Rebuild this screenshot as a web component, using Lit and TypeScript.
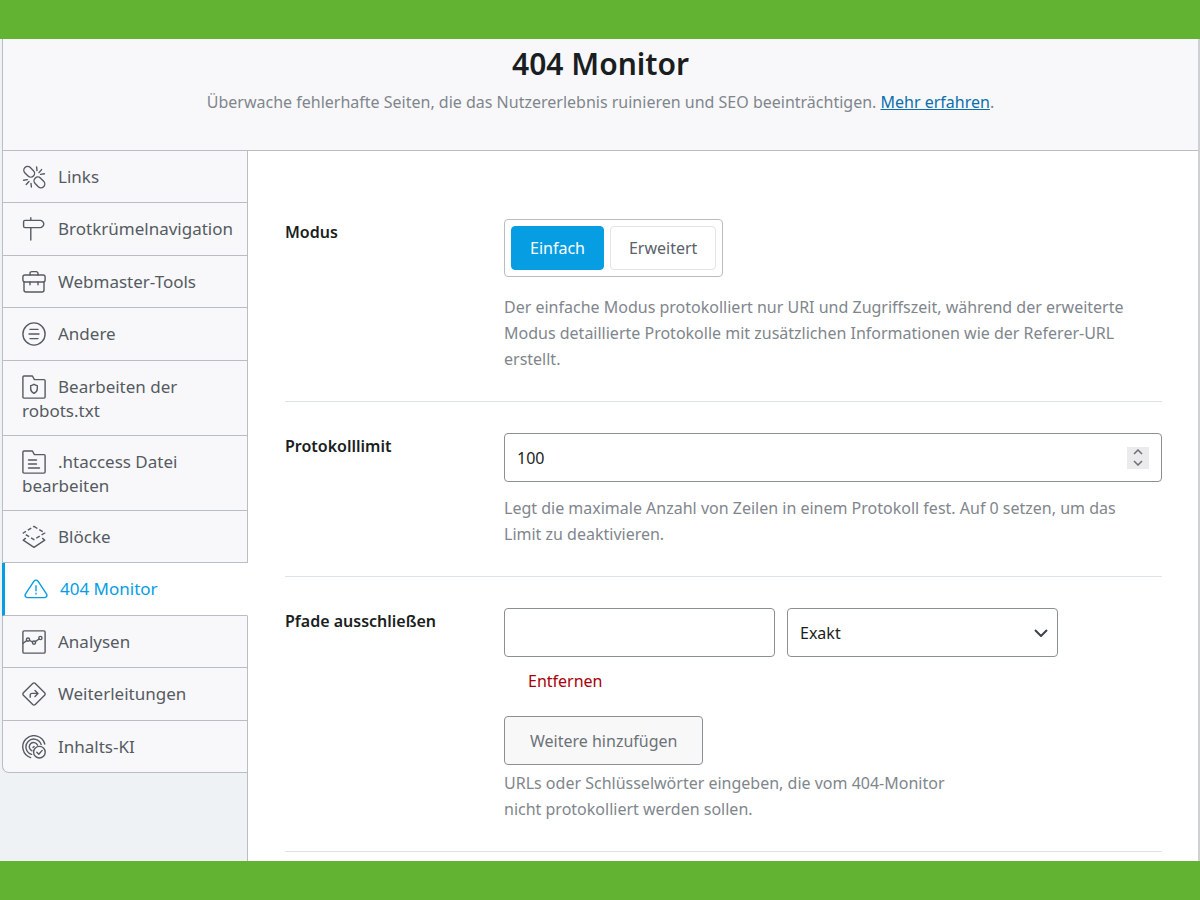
import { LitElement, html, svg, css } from "lit";
import { customElement, state } from "lit/decorators.js";
import { classMap } from "lit/directives/class-map.js";

const icons = {
  links: svg`<rect x="1.2" y="3" width="12" height="7.6" rx="3.8" transform="rotate(45 7.2 6.8)"/><rect x="11.4" y="13.6" width="12" height="7.6" rx="3.8" transform="rotate(45 17.4 17.4)"/><path d="M15 5.6 14.6 2M17 7.6l2.6-3M18.6 9.4l3.8-.6M9 18.4l.4 3.6M7 16.4l-2.8 3M5.4 14.6l-3.8.6"/>`,
  signpost: svg`<path d="M8.800 .8v2.600M8.800 10.600V23M3 3.400h15.200c1.600 0 3.600 2 3.600 3.600s-2 3.600-3.600 3.600H3c-.9 0-1.400-.6-1.400-1.400V4.800c0-.8.5-1.400 1.400-1.400z"/>`,
  briefcase: svg`<rect x=".9" y="5" width="22.2" height="7" rx="2"/><path d="M2 11.6V20c0 1.200.8 2 2 2h16c1.200 0 2-.8 2-2v-8.400M8 5V3.600c0-1.300.7-2 2-2h4c1.300 0 2 .7 2 2V5M8 12v2.800M16 12v2.800"/>`,
  list: svg`<circle cx="12" cy="12" r="11.100"/><path d="M8 7.400h8M7 12h10M8 16.600h8"/>`,
  robots: svg`<path d="M2 1h8.400l2 3.600H22c.7 0 1.100.4 1.100 1.100V22c0 .7-.4 1.100-1.100 1.100H2c-.7 0-1.100-.4-1.100-1.100V2.100C.9 1.400 1.300 1 2 1zM12 9.200c1 .8 2 1.200 3.300 1.400v3.100c0 2-1.500 3.800-3.300 4.700-1.800-.9-3.300-2.700-3.300-4.700v-3.100c1.300-.2 2.300-.6 3.300-1.400z"/>`,
  file: svg`<path d="M2 1h8.400l2 3.600H22c.7 0 1.100.4 1.100 1.100V22c0 .7-.4 1.100-1.100 1.100H2c-.7 0-1.100-.4-1.100-1.100V2.100C.9 1.400 1.300 1 2 1zM6.500 10h8M6.500 14h8M6.500 18h11"/>`,
  blocks: svg`<path stroke-linecap="butt" stroke-dasharray="4 2.200" d="M12 1.400 22.800 8 12 14.600 1.200 8z"/><path d="M3.400 13.400l-2.200 1.800L12 22.400l10.800-7.200-2.200-1.800"/>`,
  warning: svg`<path d="M10 4.200c.9-1.500 3.100-1.500 4 0l8.600 13c.9 1.500-.2 3.400-2 3.400H3.400c-1.800 0-2.900-1.900-2-3.400zM12 8.800v5M12 16.200v.8"/>`,
  chart: svg`<rect x=".9" y=".9" width="22.200" height="22.200" rx="1.200"/><circle cx="6" cy="9.600" r="1.600"/><circle cx="12" cy="12.600" r="1.600"/><circle cx="18.400" cy="8" r="1.600"/><path d="M1 13.200l3.700-2.600M7.500 10.400l3 1.600M13.300 11.600 17 9"/>`,
  redirect: svg`<path d="M10.700 1.400 1.400 10.700c-.7.7-.7 1.900 0 2.600l9.300 9.300c.7.7 1.900.7 2.600 0l9.300-9.300c.7-.7.7-1.900 0-2.600l-9.300-9.300c-.7-.7-1.900-.7-2.600 0zM8.200 15.200v-2c0-1.200.6-1.800 1.800-1.800h5.600M13 8.400l3 3-3 3"/>`,
  ai: svg`<path d="M22.800 9A11.200 11.200 0 1 0 8.600 22.600M19.200 9.600A7.800 7.800 0 1 0 9.600 19.400M15.600 10.200A4.300 4.300 0 1 0 10 15.800M12 11.600l-1 1"/><circle cx="17.400" cy="17.200" r="5.800"/><path d="M14.800 17.200l2 2 3.400-3.800"/>`,
};

type IconName = keyof typeof icons;

const tabs: { label: string; icon: IconName }[] = [
  { label: "Links", icon: "links" },
  { label: "Brotkrümelnavigation", icon: "signpost" },
  { label: "Webmaster-Tools", icon: "briefcase" },
  { label: "Andere", icon: "list" },
  { label: "Bearbeiten der robots.txt", icon: "robots" },
  { label: ".htaccess Datei bearbeiten", icon: "file" },
  { label: "Blöcke", icon: "blocks" },
  { label: "404 Monitor", icon: "warning" },
  { label: "Analysen", icon: "chart" },
  { label: "Weiterleitungen", icon: "redirect" },
  { label: "Inhalts-KI", icon: "ai" },
];

@customElement("settings-nav")
export class SettingsNav extends LitElement {
  static styles = css`
    :host { display: block; }
    .list {
      display: grid;
      grid-template-rows: repeat(4, 7fr) repeat(2, 10fr) repeat(5, 7fr);
      min-height: 622px;
      margin: 0;
      padding: 0;
      list-style: none;
    }
    .item { display: grid; }
    .tab {
      box-sizing: border-box;
      padding: 14px 8px 0 19px;
      background: #f8f8fa;
      border: solid #b9bec6;
      border-width: 0 1px 1px 1px;
      color: #555b62;
      font-size: 17px;
      line-height: 24px;
      text-decoration: none;
    }
    .item:last-child .tab { border-bottom-left-radius: 7px; }
    .active {
      background: #fff;
      border-left: 3px solid #069de3;
      border-right-color: #fff;
      color: #069de3;
    }
    .icon {
      width: 24px;
      height: 24px;
      margin-right: 12px;
      vertical-align: top;
      fill: none;
      stroke: currentColor;
      stroke-width: 1.4;
      stroke-linecap: round;
      stroke-linejoin: round;
    }
  `;

  render() {
    return html`<nav aria-label="Einstellungen">
      <ul class="list">
        ${tabs.map((t) => {
          const active = t.label === "404 Monitor";
          return html`<li class="item"><a class=${classMap({ tab: true, active })} href="#" aria-current=${active ? "page" : "false"}><svg class="icon" viewBox="0 0 24 24" aria-hidden="true">${icons[t.icon]}</svg>${t.label}</a></li>`;
        })}
      </ul>
    </nav>`;
  }
}

@customElement("app-root")
export class AppRoot extends LitElement {
  static styles = css`
    :host {
      display: flex;
      flex-direction: column;
      min-height: 100vh;
      background: #eff2f5;
      color: #7f868d;
      font-family: "Noto Sans", "Open Sans", sans-serif;
      font-size: 16px;
      line-height: 26px;
    }
    * { box-sizing: border-box; }
    .band { height: 39px; background: #62b332; }
    .frame {
      flex: 1;
      display: flex;
      flex-direction: column;
      margin-left: 2px;
      border-right: 2px solid #cfd0d4;
    }
    .header {
      padding: 5px 16px 35px;
      background: #f8f8fa;
      border: solid #b9bec6;
      border-width: 0 0 1px 1px;
      text-align: center;
    }
    .title {
      margin: 0;
      padding-bottom: 5px;
      color: #1a1e22;
      font-size: 30px;
      line-height: 40px;
      font-weight: 600;
    }
    .intro { margin: 0; }
    .link { color: #0b6fad; }
    .body {
      flex: 1;
      display: grid;
      grid-template-columns: 246px minmax(0, 1fr);
    }
    .panel {
      margin-left: -1px;
      padding: 37px 36px 0 38px;
      background: linear-gradient(#b9bec6, #b9bec6) left / 1px 100% no-repeat #fff;
    }
    .nav { position: relative; z-index: 1; align-self: start; }
    .row {
      display: grid;
      grid-template-columns: 219px minmax(0, 1fr);
      padding: 31px 0 29px;
      border-bottom: 1px solid #dfe2e5;
    }
    .name { color: #1a1e22; font-weight: 600; }
    .field { display: flex; flex-direction: column; align-items: flex-start; }
    .help { margin: 0; padding-right: 20px; }
    .modes {
      display: flex;
      gap: 6px;
      padding: 6px;
      margin-bottom: 17px;
      border: 1px solid #b9bdc1;
      border-radius: 4px;
    }
    .mode {
      display: flex;
      align-items: center;
      height: 44px;
      padding: 0 18px;
      border: 1px solid #e2e4e7;
      border-radius: 4px;
      color: #5a6168;
    }
    .mode.on { background: #069de3; border-color: #069de3; color: #fff; }
    .radio { appearance: none; width: 0; height: 0; margin: 0; }
    .control {
      width: 100%;
      height: 49px;
      padding: 0 12px;
      border: 1px solid #8c8f94;
      border-radius: 4px;
      background: #fff;
      color: #1a1e22;
      font: inherit;
    }
    .number { display: flex; align-items: center; margin-bottom: 13px; }
    .bare {
      flex: 1;
      min-width: 0;
      padding: 0;
      border: 0;
      outline: 0;
      color: inherit;
      font: inherit;
      appearance: textfield;
    }
    .bare::-webkit-inner-spin-button { appearance: none; margin: 0; }
    .spin { display: flex; flex-direction: column; width: 22px; background: #ebebed; }
    .step { display: flex; justify-content: center; align-items: center; height: 11px; padding: 0; border: 0; background: none; }
    .arrow { width: 10px; height: 6px; fill: none; stroke: #6c7075; stroke-width: 1.5; }
    .pair { display: grid; grid-template-columns: repeat(2, minmax(0, 271px)); gap: 12px; width: 100%; }
    .pick { display: grid; grid-template-columns: minmax(0, 1fr) auto; align-items: center; }
    .select { grid-area: 1 / 1 / 2 / 3; appearance: none; }
    .chevron { grid-area: 1 / 2; width: 14px; height: 8px; margin-right: 10px; fill: none; stroke: #3c434a; stroke-width: 2; pointer-events: none; }
    .remove {
      margin: 11px 0 22px;
      padding: 0 24px;
      border: 0;
      background: none;
      color: #a80008;
      font: inherit;
    }
    .add {
      height: 49px;
      margin-bottom: 5px;
      padding: 0 25px;
      border: 1px solid #8c8f94;
      border-radius: 4px;
      background: #f8f8f9;
      color: #6c7278;
      font: inherit;
    }
    .narrow { max-width: 72%; }
  `;

  @state() private mode = "Einfach";
  @state() private limit = 100;

  render() {
    return html`
      <div class="band"></div>
      <div class="frame">
        <header class="header">
          <h1 class="title">404 Monitor</h1>
          <p class="intro">Überwache fehlerhafte Seiten, die das Nutzererlebnis ruinieren und SEO beeinträchtigen. <a class="link" href="#">Mehr erfahren</a>.</p>
        </header>
        <div class="body">
          <settings-nav class="nav"></settings-nav>
          <main class="panel">
            <section class="row">
              <span class="name" id="mode-name">Modus</span>
              <div class="field">
                <div class="modes" role="radiogroup" aria-labelledby="mode-name">
                  ${["Einfach", "Erweitert"].map(
                    (m) => html`<label class=${classMap({ mode: true, on: m === this.mode })}><input class="radio" type="radio" name="mode" .checked=${m === this.mode} @change=${() => (this.mode = m)} />${m}</label>`
                  )}
                </div>
                <p class="help">Der einfache Modus protokolliert nur URI und Zugriffszeit, während der erweiterte Modus detaillierte Protokolle mit zusätzlichen Informationen wie der Referer-URL erstellt.</p>
              </div>
            </section>
            <section class="row">
              <label class="name" for="limit">Protokolllimit</label>
              <div class="field">
                <div class="control number">
                  <input class="bare" id="limit" type="number" .value=${String(this.limit)} @input=${(e: Event) => (this.limit = Number((e.target as HTMLInputElement).value))} />
                  <div class="spin">
                    <button class="step" type="button" aria-label="Erhöhen" @click=${() => this.limit++}><svg class="arrow" viewBox="0 0 10 6"><path d="M1 5l4-4 4 4" /></svg></button>
                    <button class="step" type="button" aria-label="Verringern" @click=${() => this.limit--}><svg class="arrow" viewBox="0 0 10 6"><path d="M1 1l4 4 4-4" /></svg></button>
                  </div>
                </div>
                <p class="help">Legt die maximale Anzahl von Zeilen in einem Protokoll fest. Auf 0 setzen, um das Limit zu deaktivieren.</p>
              </div>
            </section>
            <section class="row">
              <label class="name" for="path">Pfade ausschließen</label>
              <div class="field">
                <div class="pair">
                  <input class="control" id="path" type="text" />
                  <div class="pick">
                    <select class="control select" aria-label="Vergleich"><option>Exakt</option></select>
                    <svg class="chevron" viewBox="0 0 14 8"><path d="M1 1l6 6 6-6" /></svg>
                  </div>
                </div>
                <button class="remove" type="button">Entfernen</button>
                <button class="add" type="button">Weitere hinzufügen</button>
                <p class="help narrow">URLs oder Schlüsselwörter eingeben, die vom 404-Monitor nicht protokolliert werden sollen.</p>
              </div>
            </section>
          </main>
        </div>
      </div>
      <div class="band"></div>
    `;
  }
}
